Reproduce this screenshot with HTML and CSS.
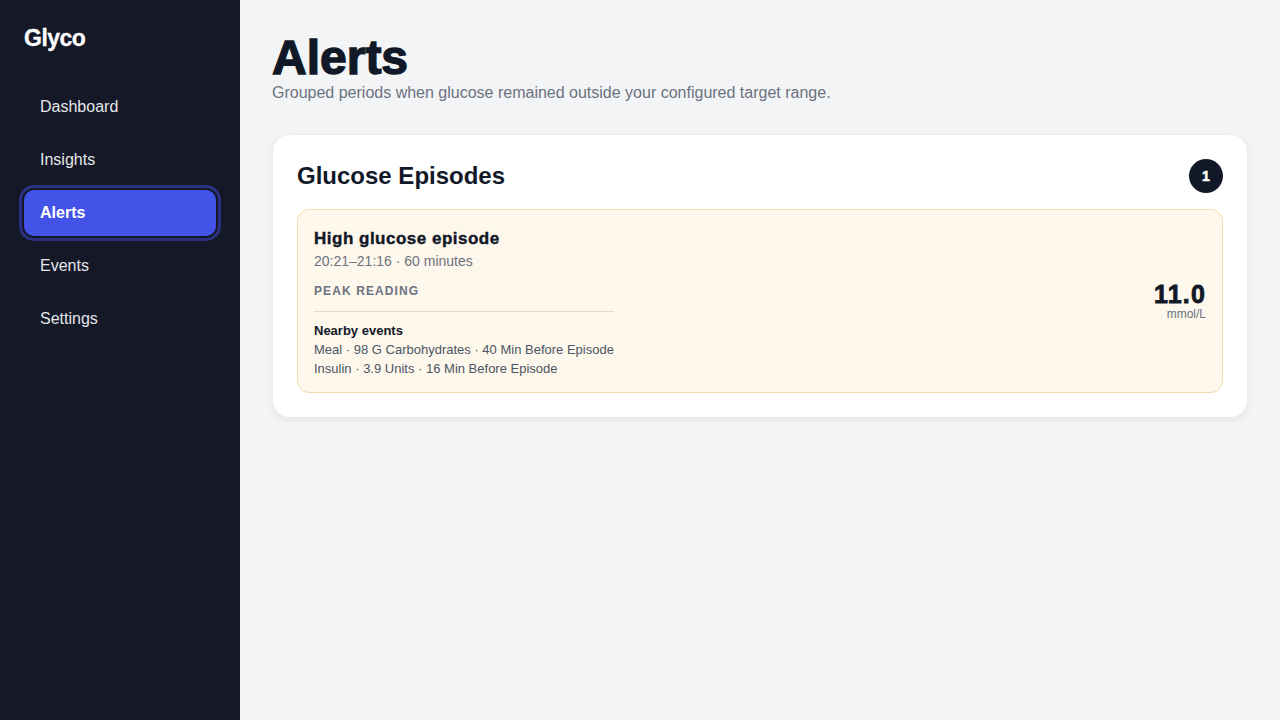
FILE: index.html
```html
<!DOCTYPE html>
<html lang="en">

<head>
  <meta charset="UTF-8">
  <meta name="viewport" content="width=device-width, initial-scale=1.0">
  <title>Glyco - Alerts</title>
  <link rel="stylesheet" href="styles.css">
</head>

<body>
  <aside class="sidebar">
    <div class="logo">Glyco</div>
    <nav class="nav">
      <a href="#" class="nav-link">Dashboard</a>
      <a href="#" class="nav-link">Insights</a>
      <a href="#" class="nav-link active">Alerts</a>
      <a href="#" class="nav-link">Events</a>
      <a href="#" class="nav-link">Settings</a>
    </nav>
  </aside>

  <main class="main">
    <header class="page-head">
      <h1>Alerts</h1>
      <p class="subtitle">Grouped periods when glucose remained outside your configured target range.</p>
    </header>

    <section class="card">
      <div class="card-head">
        <h2>Glucose Episodes</h2>
        <span class="badge">1</span>
      </div>

      <div class="episode">
        <div class="episode-info">
          <h3>High glucose episode</h3>
          <p class="meta">20:21–21:16 · 60 minutes</p>
          <p class="label">Peak reading</p>
          <div class="nearby">
            <p class="nearby-title">Nearby events</p>
            <p>Meal · 98 G Carbohydrates · 40 Min Before Episode</p>
            <p>Insulin · 3.9 Units · 16 Min Before Episode</p>
          </div>
        </div>
        <div class="peak">
          <div class="peak-value">11.0</div>
          <div class="peak-unit">mmol/L</div>
        </div>
      </div>
    </section>
  </main>
</body>

</html>
```

FILE: styles.css
```css
* {
  box-sizing: border-box;
}

body {
  margin: 0;
  display: flex;
  min-height: 100vh;
  background: #f3f4f6;
  font-family: "Liberation Sans", Arial, sans-serif;
  color: #111827;
}

p {
  margin: 0;
}

.sidebar {
  width: 240px;
  flex-shrink: 0;
  background: #141827;
  padding: 24px 24px;
}

.logo {
  color: #fff;
  font-size: 23px;
  font-weight: 700;
  letter-spacing: -0.5px;
  line-height: 28px;
  -webkit-text-stroke: 0.3px #fff;
}

.nav {
  display: flex;
  flex-direction: column;
  gap: 7px;
  margin-top: 32px;
}

.nav-link {
  display: block;
  color: #e5e7eb;
  text-decoration: none;
  font-size: 16px;
  line-height: 20px;
  padding: 13px 16px;
  border-radius: 10px;
}

.nav-link.active {
  background: #4353e8;
  color: #fff;
  font-weight: 700;
  box-shadow: 0 0 0 2px #141827, 0 0 0 5px #2a3181;
}

.main {
  flex: 1;
  padding: 32px 33px 32px 32px;
}

.page-head h1 {
  margin: 0;
  font-size: 48px;
  line-height: 52px;
  font-weight: 800;
  letter-spacing: 0;
  color: #111827;
  -webkit-text-stroke: 1.4px #111827;
}

.subtitle {
  margin-top: 0;
  font-size: 16px;
  color: #6b7280;
}

.card {
  margin-top: 33px;
  margin-left: 1px;
  background: #fff;
  border-radius: 16px;
  padding: 24px;
  box-shadow: 0 2px 8px rgba(17, 24, 39, 0.08);
}

.card-head {
  display: flex;
  justify-content: space-between;
  align-items: center;
  margin-bottom: 16px;
}

.card-head h2 {
  margin: 0;
  font-size: 24px;
  font-weight: 700;
}

.badge {
  width: 34px;
  height: 34px;
  border-radius: 50%;
  background: #111827;
  color: #fff;
  font-size: 14px;
  font-weight: 800;
  -webkit-text-stroke: 0.6px #fff;
  display: flex;
  align-items: center;
  justify-content: center;
}

.episode {
  display: flex;
  justify-content: space-between;
  align-items: center;
  background: #fef7eb;
  border: 1px solid #f2dcae;
  border-radius: 12px;
  padding: 18px 16px 14px;
}

.episode h3 {
  margin: 0;
  font-size: 17px;
  line-height: 22px;
  font-weight: 800;
  letter-spacing: 0.5px;
  -webkit-text-stroke: 0.4px #111827;
}

.meta {
  margin-top: 3px;
  font-size: 14px;
  color: #6b7280;
}

.label {
  margin-top: 15px;
  font-size: 12px;
  font-weight: 700;
  letter-spacing: 1.1px;
  text-transform: uppercase;
  color: #6b7280;
}

.nearby {
  margin-top: 13px;
  padding-top: 9px;
  border-top: 1px solid #e8dcc8;
  font-size: 13px;
  line-height: 19px;
  color: #4b5563;
}

.nearby-title {
  font-weight: 700;
  color: #111827;
}

.peak {
  text-align: right;
  padding-bottom: 4px;
}

.peak-value {
  font-size: 25px;
  font-weight: 800;
  letter-spacing: 1.2px;
  line-height: 26px;
  -webkit-text-stroke: 0.8px #111827;
}

.peak-unit {
  font-size: 12px;
  color: #6b7280;
}
```
